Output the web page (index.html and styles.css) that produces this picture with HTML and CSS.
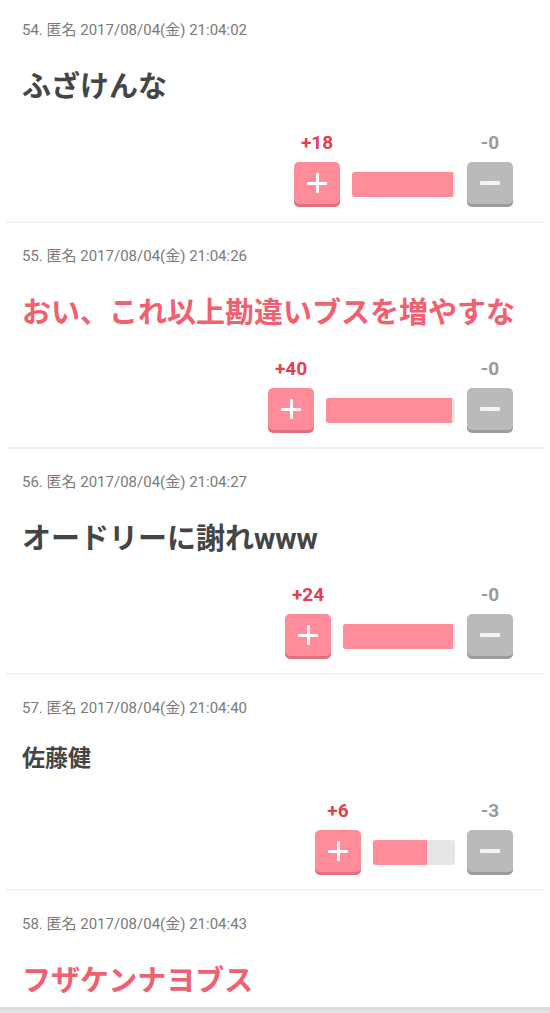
FILE: index.html
```html
<!DOCTYPE html>
<html lang="ja">
<head>
<meta charset="utf-8">
<link rel="stylesheet" href="styles.css">
</head>
<body>
<div class="list">
  <div class="post">
    <div class="meta">54. 匿名 2017/08/04(金) 21:04:02</div>
    <div class="body">ふざけんな</div>
    <div class="vote">
      <div class="col"><span class="num plus-num">+18</span><button class="btn plus"><span class="ico-plus"></span></button></div>
      <div class="bar" style="width:103px"><div class="fill" style="width:98%"></div></div>
      <div class="col"><span class="num minus-num">-0</span><button class="btn minus"><span class="ico-minus"></span></button></div>
    </div>
  </div>
  <div class="post">
    <div class="meta">55. 匿名 2017/08/04(金) 21:04:26</div>
    <div class="body pink">おい、これ以上勘違いブスを増やすな</div>
    <div class="vote">
      <div class="col"><span class="num plus-num">+40</span><button class="btn plus"><span class="ico-plus"></span></button></div>
      <div class="bar" style="width:129px"><div class="fill" style="width:98%"></div></div>
      <div class="col"><span class="num minus-num">-0</span><button class="btn minus"><span class="ico-minus"></span></button></div>
    </div>
  </div>
  <div class="post">
    <div class="meta">56. 匿名 2017/08/04(金) 21:04:27</div>
    <div class="body">オードリーに謝れwww</div>
    <div class="vote">
      <div class="col"><span class="num plus-num">+24</span><button class="btn plus"><span class="ico-plus"></span></button></div>
      <div class="bar" style="width:112px"><div class="fill" style="width:98%"></div></div>
      <div class="col"><span class="num minus-num">-0</span><button class="btn minus"><span class="ico-minus"></span></button></div>
    </div>
  </div>
  <div class="post">
    <div class="meta">57. 匿名 2017/08/04(金) 21:04:40</div>
    <div class="body small">佐藤健</div>
    <div class="vote">
      <div class="col"><span class="num plus-num">+6</span><button class="btn plus"><span class="ico-plus"></span></button></div>
      <div class="bar" style="width:82px"><div class="fill" style="width:66%"></div></div>
      <div class="col"><span class="num minus-num">-3</span><button class="btn minus"><span class="ico-minus"></span></button></div>
    </div>
  </div>
  <div class="post last">
    <div class="meta">58. 匿名 2017/08/04(金) 21:04:43</div>
    <div class="body pink">フザケンナヨブス</div>
  </div>
</div>
<div class="bottom-bar"></div>
</body>
</html>
```
FILE: styles.css
```css
html, body {
  margin: 0;
  padding: 0;
  background: #ffffff;
  overflow: hidden;
}
body {
  font-family: Roboto, "Noto Sans CJK JP", sans-serif;
  color: #444444;
}
.list {
  margin-top: -3px;
}
.post {
  margin: 0 6px;
  padding: 23px 16px 14px;
  border-bottom: 2px solid #f2f2f2;
}
.post.last {
  border-bottom: none;
}
.meta {
  font-size: 15px;
  line-height: 20px;
  color: #7a7a7a;
}
.body {
  margin-top: 27px;
  font-size: 29px;
  line-height: 40px;
  font-weight: bold;
  color: #454545;
  white-space: nowrap;
}
.body.small {
  font-size: 23px;
  line-height: 30px;
  margin-top: 26px;
}
.body.pink {
  color: #f0606f;
}
.vote {
  display: flex;
  justify-content: flex-end;
  align-items: flex-end;
  gap: 12px;
  margin-top: 25px;
  margin-right: 15px;
}
.body.small + .vote {
  margin-top: 26px;
}
.col {
  display: flex;
  flex-direction: column;
  align-items: center;
  gap: 8px;
}
.num {
  font-size: 19px;
  line-height: 22px;
  font-weight: bold;
}
.plus-num { color: #e2404f; }
.minus-num { color: #9a9a9a; }
.btn {
  width: 46px;
  height: 42px;
  margin: 0 0 3px;
  padding: 0;
  border: none;
  border-radius: 5px;
  display: flex;
  align-items: center;
  justify-content: center;
  position: relative;
}
.btn.plus {
  background: #ff8c99;
  box-shadow: 0 3px 0 #df6f7d;
}
.btn.minus {
  background: #bababa;
  box-shadow: 0 3px 0 #9c9c9c;
}
.ico-plus {
  position: relative;
  width: 20px;
  height: 20px;
}
.ico-plus::before, .ico-plus::after {
  content: "";
  position: absolute;
  background: #ffffff;
  border-radius: 1px;
}
.ico-plus::before {
  left: 0; right: 0; top: 8.5px; height: 3px;
}
.ico-plus::after {
  top: 0; bottom: 0; left: 8.5px; width: 3px;
}
.ico-minus {
  width: 20px;
  height: 4px;
  background: #f4f4f4;
  border-radius: 1px;
}
.bar {
  height: 25px;
  margin-bottom: 10px;
  background: #e6e6e6;
  border-radius: 3px;
  overflow: hidden;
  display: flex;
}
.fill {
  background: #ff8c99;
  height: 100%;
}
.bottom-bar {
  position: fixed;
  left: 0;
  right: 0;
  bottom: 0;
  height: 6px;
  background: linear-gradient(#d8d8d8, #e6e6e6);
}
```
